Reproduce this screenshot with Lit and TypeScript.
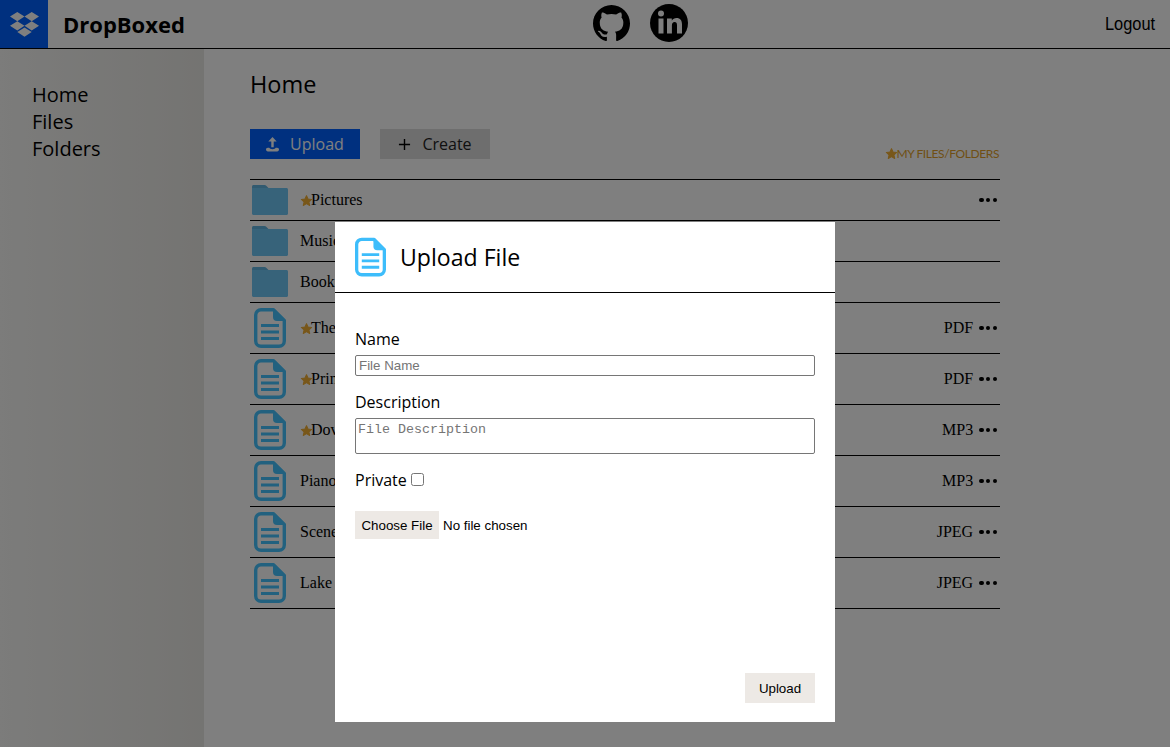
import { LitElement, html, css, svg } from 'lit';
import { customElement } from 'lit/decorators.js';

type Row = { kind: 'folder' | 'file'; name: string; starred?: boolean; type?: string; menu?: boolean };

const ROWS: Row[] = [
  { kind: 'folder', name: 'Pictures', starred: true, menu: true },
  { kind: 'folder', name: 'Music' },
  { kind: 'folder', name: 'Books' },
  { kind: 'file', name: 'The', starred: true, type: 'PDF', menu: true },
  { kind: 'file', name: 'Print', starred: true, type: 'PDF', menu: true },
  { kind: 'file', name: 'Dove', starred: true, type: 'MP3', menu: true },
  { kind: 'file', name: 'Piano', type: 'MP3', menu: true },
  { kind: 'file', name: 'Scene', type: 'JPEG', menu: true },
  { kind: 'file', name: 'Lake', type: 'JPEG', menu: true },
];

const star = html`<svg class="star" viewBox="0 0 24 24"><path d="M12 3l2.800 6.200 6.700.8-5 4.600 1.400 6.600-5.900-3.400-5.900 3.400 1.400-6.600-5-4.600 6.700-.8z" /></svg>`;

// two tone: the tab sits a little darker than the body
const folderIcon = html`<svg class="folder" viewBox="0 0 36 30">
  <path class="tab" d="M1.500 0h11c.8 0 1.400.3 2 .9L17 3.500H0v-2C0 .7.700 0 1.500 0z" />
  <path d="M0 3h34.500c.8 0 1.500.7 1.500 1.500v24c0 .8-.7 1.500-1.500 1.500h-33C.7 30 0 29.300 0 28.500z" />
</svg>`;

const fileIcon = html`<svg class="file" viewBox="0 0 32 40">${svg`
  <path d="M7 1.700h12.500L30.300 12.500V33a5.300 5.300 0 0 1-5.300 5.300H7A5.300 5.300 0 0 1 1.700 33V7A5.300 5.300 0 0 1 7 1.700z" fill="none" stroke-width="3.400" stroke-linejoin="round" />
  <path d="M19 1.700V9a4 4 0 0 0 4 4h7.300z" stroke="none" />
  <path d="M7 17.500h18M7 24h18M7 30.500h18" fill="none" stroke-width="3" />
`}</svg>`;

@customElement('app-root')
export class AppRoot extends LitElement {
  static styles = css`
    :host {
      display: block;
      position: relative;
      height: 747px;
      overflow: hidden;
      background: #fff;
      font-family: 'Open Sans', sans-serif;
      color: #000;
    }

    /* top bar */
    .header {
      display: flex;
      align-items: center;
      height: 48px;
      border-bottom: 1px solid #000;
      position: relative;
    }
    .logo {
      display: flex;
      align-items: center;
      justify-content: center;
      width: 48px;
      height: 48px;
      background: #0061ff;
    }
    .logo svg {
      width: 29px;
      height: 25px;
      fill: #fff;
    }
    .brand {
      margin-left: 15px;
      font-size: 22px;
      font-weight: 700;
    }
    .social {
      position: absolute;
      left: 593px;
      top: 4px;
      display: flex;
      align-items: center;
      gap: 20px;
    }
    .social svg {
      display: block;
      width: 38px;
      height: 38px;
    }
    .social svg.gh {
      width: 37px;
      height: 37px;
    }
    .logout {
      margin-left: auto;
      margin-right: 15px;
      font: 18px 'Liberation Sans', sans-serif;
      transform: scaleX(0.91);
      transform-origin: right center;
    }

    .layout {
      display: flex;
      height: 698px;
    }
    .side {
      width: 204px;
      box-sizing: border-box;
      padding: 32px 0 0 32px;
      background: linear-gradient(90deg, #f8f8f6, #e9e8e4);
      font-size: 20px;
      line-height: 27px;
    }
    .main {
      width: 750px;
      margin-left: 46px;
    }
    h1 {
      margin: 0;
      padding-top: 19px;
      font-size: 23.500px;
      font-weight: 400;
      line-height: 33px;
    }
    .actions {
      display: flex;
      align-items: flex-start;
      gap: 20px;
      margin-top: 28px;
      position: relative;
      height: 50px;
    }
    .btn {
      display: flex;
      align-items: center;
      justify-content: center;
      gap: 11px;
      width: 110px;
      height: 30px;
      font-size: 16px;
    }
    .btn svg {
      width: 13px;
      height: 15px;
    }
    .upload {
      background: #0061ff;
      color: #fff;
    }
    .upload svg {
      fill: #fff;
    }
    .create {
      background: #ddd;
      color: #222;
    }
    .create svg {
      stroke: #000;
      stroke-width: 1.500;
    }
    .tag {
      position: absolute;
      right: 1px;
      top: 17px;
      display: flex;
      align-items: center;
      font: 12px 'Lato', sans-serif;
      letter-spacing: -0.4px;
      color: #e09e28;
    }

    .list {
      border-top: 1px solid #000;
    }
    .row {
      display: flex;
      align-items: center;
      border-bottom: 1px solid #000;
      font-family: 'Liberation Serif', serif;
      font-size: 16px;
      box-sizing: border-box;
      padding-right: 3px;
    }
    .row.folder-row {
      height: 41px;
    }
    .row.file-row {
      height: 51px;
    }
    .ico {
      width: 50px;
      display: flex;
      align-items: center;
      padding-left: 2px;
      box-sizing: border-box;
      flex: none;
    }
    .folder {
      width: 36px;
      height: 30px;
      fill: #6fc6f5;
    }
    .folder .tab {
      fill: #63b4e0;
    }
    .file {
      width: 31px;
      height: 40px;
      fill: #3dbdfb;
      stroke: #3dbdfb;
    }
    .row .file {
      width: 32px;
      margin-left: 2px;
      fill: #45c3ff;
      stroke: #45c3ff;
    }
    .star {
      width: 13px;
      height: 13px;
      flex: none;
      fill: #f0ae35;
      stroke: #f0ae35;
      stroke-width: 2;
      stroke-linejoin: round;
      margin-right: -2px;
    }
    .name {
      flex: 1;
      display: flex;
      align-items: center;
    }
    .type {
      margin-right: 6px;
    }
    .dots {
      display: flex;
      gap: 2.200px;
    }
    .dots i {
      width: 4.500px;
      height: 4.500px;
      border-radius: 50%;
      background: #000;
    }

    /* dim layer and dialog */
    .scrim {
      position: absolute;
      inset: 0;
      background: rgba(0, 0, 0, 0.5);
    }
    .modal {
      position: absolute;
      left: 335px;
      top: 222px;
      width: 500px;
      height: 500px;
      background: #fff;
      display: flex;
      flex-direction: column;
    }
    .modal-head {
      display: flex;
      align-items: center;
      gap: 14px;
      height: 70px;
      flex: none;
      padding-left: 20px;
      border-bottom: 1px solid #000;
      font-size: 23.100px;
    }
    .modal-body {
      flex: 1;
      display: flex;
      flex-direction: column;
      padding: 35px 20px 19px;
      font-size: 16px;
    }
    label {
      display: block;
      line-height: 22px;
    }
    .field {
      display: block;
      box-sizing: border-box;
      width: 460px;
      margin: 0;
      padding: 1px 3px;
      border: 1px solid #767676;
      border-radius: 2px;
      background: #fff;
      outline: none;
    }
    .named {
      margin-bottom: 5px;
    }
    input.field {
      height: 21px;
      font: 13.333px 'Liberation Sans', sans-serif;
    }
    textarea.field {
      height: 36px;
      padding: 3px 2px;
      resize: none;
      font: 13.333px 'Liberation Mono', monospace;
    }
    .field::placeholder {
      color: #757575;
    }
    .gap-top {
      margin-top: 15px;
    }
    .private {
      display: flex;
      align-items: center;
      margin-top: 15px;
    }
    .private input {
      width: 13px;
      height: 13px;
      margin: 0 0 2px 4px;
    }
    .picker {
      display: block;
      margin-top: 20px;
      font: 13.333px 'Liberation Sans', sans-serif;
      width: 300px;
      height: 28px;
    }
    .picker::file-selector-button {
      height: 28px;
      width: 84px;
      margin-right: 4px;
      padding: 0;
      border: none;
      border-radius: 0;
      background: #ede9e5;
      color: #000;
      font: 13.333px 'Liberation Sans', sans-serif;
    }
    .submit {
      align-self: flex-end;
      margin-top: auto;
      width: 70px;
      height: 30px;
      padding: 0;
      border: none;
      background: #ede9e5;
      color: #000;
      font: 13.333px 'Liberation Sans', sans-serif;
    }
  `;

  private renderRow(row: Row) {
    const isFolder = row.kind === 'folder';
    return html`
      <div class="row ${isFolder ? 'folder-row' : 'file-row'}">
        <div class="ico">${isFolder ? folderIcon : fileIcon}</div>
        <div class="name">${row.starred ? star : ''}${row.name}</div>
        ${row.type ? html`<span class="type">${row.type}</span>` : ''}
        ${row.menu ? html`<span class="dots"><i></i><i></i><i></i></span>` : ''}
      </div>
    `;
  }

  render() {
    return html`
      <header class="header">
        <div class="logo">
          <svg viewBox="0 0 29 25">
            <path d="M7.300 0L14.500 4.600 7.300 9.200 0 4.600zM21.700 0L29 4.600 21.700 9.200 14.500 4.600zM0 13.800L7.300 9.200l7.200 4.600-7.200 4.600zM21.700 9.200L29 13.800l-7.300 4.600-7.200-4.600zM7.300 20L14.500 15.400 21.700 20l-7.200 4.800z" />
          </svg>
        </div>
        <div class="brand">DropBoxed</div>
        <div class="social">
          <svg class="gh" viewBox="0 0 16 16">
            <path d="M8 0C3.580 0 0 3.580 0 8c0 3.540 2.290 6.530 5.470 7.590.4.070.55-.17.55-.38 0-.19-.01-.82-.01-1.490-2.010.37-2.530-.49-2.690-.94-.09-.23-.48-.94-.82-1.130-.28-.15-.68-.52-.01-.53.63-.01 1.080.58 1.230.82.72 1.210 1.870.87 2.330.66.070-.52.28-.87.51-1.070-1.780-.2-3.640-.89-3.640-3.950 0-.87.31-1.590.82-2.150-.08-.2-.36-1.020.08-2.120 0 0 .67-.21 2.200.82.64-.18 1.320-.27 2-.27.68 0 1.360.09 2 .27 1.530-1.040 2.200-.82 2.200-.82.44 1.100.16 1.920.08 2.120.51.56.82 1.270.82 2.150 0 3.070-1.870 3.750-3.650 3.950.29.25.54.73.54 1.480 0 1.070-.01 1.930-.01 2.200 0 .21.15.46.55.38A8.013 8.013 0 0016 8c0-4.420-3.580-8-8-8z" />
          </svg>
          <svg viewBox="0 0 38 38">
            <circle cx="19" cy="19" r="19" />
            <circle cx="11" cy="9.500" r="3" fill="#fff" />
            <rect x="8.500" y="14.500" width="5" height="15" fill="#fff" />
            <path d="M17 14.500h4.800v2.200c1-1.600 2.700-2.600 4.700-2.600 3.800 0 5.500 2.400 5.500 6.300v9.100h-5v-8.200c0-2-.7-3.200-2.400-3.200-1.800 0-2.700 1.300-2.700 3.300v8.100H17z" fill="#fff" />
          </svg>
        </div>
        <div class="logout">Logout</div>
      </header>
      <div class="layout">
        <nav class="side">
          <div>Home</div>
          <div>Files</div>
          <div>Folders</div>
        </nav>
        <main class="main">
          <h1>Home</h1>
          <div class="actions">
            <div class="btn upload">
              <svg viewBox="0 0 14 16">
                <path d="M7 0l4.500 4.800H8.300V11H5.700V4.800H2.500zM2 11.500h1.500c.5 1 1.500 1.500 3.500 1.500s3-.5 3.500-1.500H12c1.200 0 2 .8 2 2s-.8 2-2 2H2c-1.200 0-2-.8-2-2s.8-2 2-2z" />
              </svg>
              Upload
            </div>
            <div class="btn create">
              <svg viewBox="0 0 14 16"><path d="M7 2v12M1 8h12" fill="none" /></svg>
              Create
            </div>
            <div class="tag">${star}MY FILES/FOLDERS</div>
          </div>
          <div class="list">${ROWS.map((r) => this.renderRow(r))}</div>
        </main>
      </div>
      <div class="scrim"></div>
      <section class="modal">
        <div class="modal-head">${fileIcon}<span>Upload File</span></div>
        <form class="modal-body">
          <label class="named">Name</label>
          <input class="field" type="text" placeholder="File Name" />
          <label class="named gap-top">Description</label>
          <textarea class="field" placeholder="File Description"></textarea>
          <label class="private">Private <input type="checkbox" /></label>
          <input class="picker" type="file" />
          <button class="submit" type="button">Upload</button>
        </form>
      </section>
    `;
  }
}
